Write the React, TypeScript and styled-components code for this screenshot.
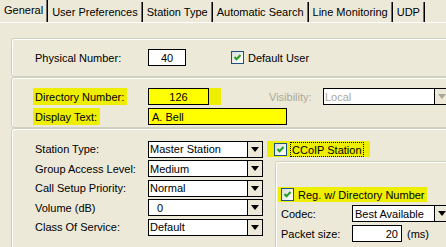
import React from "react";
import styled, { createGlobalStyle } from "styled-components";

const GlobalStyle = createGlobalStyle`
  html, body {
    margin: 0;
    padding: 0;
    background: #ece9d8;
    overflow: hidden;
  }
  body {
    font-family: "Liberation Sans", Arial, sans-serif;
    font-size: 11px;
    color: #000;
  }
`;

const Window = styled.div`
  width: 446px;
  height: 247px;
  overflow: hidden;
`;

const TabStrip = styled.div`
  display: flex;
  align-items: flex-end;
  height: 22px;
`;

const Tab = styled.div<{ $active?: boolean }>`
  height: ${(p) => (p.$active ? 22 : 20)}px;
  padding: ${(p) => (p.$active ? "0 4px 3px" : "0 4px")};
  box-sizing: border-box;
  display: flex;
  align-items: center;
  border-right: 1px solid #000;
  box-shadow: inset -1px 0 0 #716f64;
  white-space: nowrap;
`;

const Panel = styled.div`
  border-top: 1px solid #fff;
  padding: 15px 0 0 11px;
  width: 520px;
`;

const GroupBox = styled.div<{ $height: number; $pad: string }>`
  box-sizing: border-box;
  height: ${(p) => p.$height}px;
  padding: ${(p) => p.$pad};
  border: 1px solid #d0d0bf;
  border-radius: 3px;
  box-shadow: inset 1px 1px 0 #fff;
`;

const Row = styled.div<{ $h?: number }>`
  display: flex;
  align-items: center;
  height: ${(p) => p.$h ?? 17}px;
`;

const Stack = styled.div<{ $gap: number }>`
  display: flex;
  flex-direction: column;
  gap: ${(p) => p.$gap}px;
`;

const Label = styled.span<{ $w?: number; $disabled?: boolean }>`
  display: inline-block;
  width: ${(p) => (p.$w ? `${p.$w}px` : "auto")};
  flex: none;
  color: ${(p) => (p.$disabled ? "#aca899" : "#000")};
  white-space: nowrap;
`;

const Marker = styled.span<{ $w?: number }>`
  box-sizing: border-box;
  display: inline-flex;
  align-items: center;
  align-self: stretch;
  background: #eeee00;
  margin-left: -2px;
  padding: 0 3px 0 2px;
  white-space: nowrap;
  width: ${(p) => (p.$w ? `${p.$w}px` : "auto")};
`;

const LabelCell = styled.div<{ $w: number }>`
  width: ${(p) => p.$w}px;
  flex: none;
  display: flex;
  align-self: stretch;
  align-items: center;
`;

const TextBox = styled.div<{
  $w: number;
  $align?: "left" | "center" | "right";
  $fill?: string;
}>`
  box-sizing: border-box;
  width: ${(p) => p.$w}px;
  height: 17px;
  flex: none;
  border: 1px solid #000;
  background: ${(p) => p.$fill ?? "#fff"};
  display: flex;
  align-items: center;
  justify-content: ${(p) =>
    p.$align === "center" ? "center" : p.$align === "right" ? "flex-end" : "flex-start"};
  padding: 0 3px;
`;

const Select = styled.div<{ $w: number; $disabled?: boolean }>`
  box-sizing: border-box;
  width: ${(p) => p.$w}px;
  height: 17px;
  flex: none;
  border: 1px solid #000;
  background: #fff;
  display: flex;
  color: ${(p) => (p.$disabled ? "#aca899" : "#000")};
`;

const SelectValue = styled.div<{ $indent?: number }>`
  flex: 1;
  display: flex;
  align-items: center;
  padding-left: ${(p) => p.$indent ?? 1}px;
  white-space: nowrap;
  overflow: hidden;
`;

const SelectArrow = styled.div<{ $disabled?: boolean }>`
  width: 14px;
  flex: none;
  border-left: 1px solid #000;
  background: #ece9d8;
  display: flex;
  align-items: center;
  justify-content: center;
  &::after {
    content: "";
    border-left: 4px solid transparent;
    border-right: 4px solid transparent;
    border-top: 5px solid ${(p) => (p.$disabled ? "#aca899" : "#000")};
  }
`;

const CheckBox = styled.span`
  box-sizing: border-box;
  width: 13px;
  height: 13px;
  flex: none;
  border: 1px solid #1c5180;
  background: linear-gradient(135deg, #dcdcd7, #fff);
  display: inline-flex;
  margin-right: 4px;
`;

const FocusText = styled.span`
  outline: 1px dotted #000;
  outline-offset: 0;
  padding: 1px 1px 0;
`;

const Columns = styled.div`
  display: flex;
`;

const RightColumn = styled.div`
  margin-left: 4px;
  display: flex;
  flex-direction: column;
`;

const InnerBox = styled(GroupBox)`
  margin: 4px 0 0 8px;
  width: 200px;
`;

const Check = () => (
  <CheckBox>
    <svg width="11" height="11" viewBox="0 0 11 11">
      <polyline
        points="2.5,5 4.5,7.2 8.5,3"
        fill="none"
        stroke="#21a121"
        strokeWidth="2"
      />
    </svg>
  </CheckBox>
);

const Dropdown = ({
  value,
  w,
  indent,
  disabled,
}: {
  value: string;
  w: number;
  indent?: number;
  disabled?: boolean;
}) => (
  <Select $w={w} $disabled={disabled}>
    <SelectValue $indent={indent}>{value}</SelectValue>
    <SelectArrow $disabled={disabled} />
  </Select>
);

const tabs = [
  "General",
  "User Preferences",
  "Station Type",
  "Automatic Search",
  "Line Monitoring",
  "UDP",
];

const stationRows = [
  { label: "Station Type:", value: "Master Station" },
  { label: "Group Access Level:", value: "Medium" },
  { label: "Call Setup Priority:", value: "Normal" },
  { label: "Volume (dB)", value: "0", indent: 8 },
  { label: "Class Of Service:", value: "Default" },
];

export default function App() {
  return (
    <Window>
      <GlobalStyle />
      <TabStrip>
        {tabs.map((t, i) => (
          <Tab key={t} $active={i === 0}>
            {t}
          </Tab>
        ))}
      </TabStrip>
      <Panel>
        <GroupBox $height={39} $pad="10px 0 0 23px">
          <Row>
            <Label $w={113}>Physical Number:</Label>
            <TextBox $w={38} $align="center">
              40
            </TextBox>
            <Row style={{ marginLeft: 45 }}>
              <Check />
              <Label>Default User</Label>
            </Row>
          </Row>
        </GroupBox>

        <GroupBox $height={51} $pad="10px 0 0 23px">
          <Stack $gap={3}>
            <Row>
              <LabelCell $w={113}>
                <Marker>Directory Number:</Marker>
              </LabelCell>
              <Marker style={{ margin: 0, padding: "0 12px 0 0" }}>
                <TextBox $w={61} $align="center" $fill="#ffff00">
                  126
                </TextBox>
              </Marker>
              <Label $disabled style={{ marginLeft: 48, width: 54 }}>
                Visibility:
              </Label>
              <Dropdown value="Local" w={127} disabled />
            </Row>
            <Row>
              <LabelCell $w={113}>
                <Marker>Display Text:</Marker>
              </LabelCell>
              <TextBox $w={139} $fill="#ffff00">
                A. Bell
              </TextBox>
            </Row>
          </Stack>
        </GroupBox>

        <GroupBox $height={140} $pad="12px 0 0 23px">
          <Columns>
            <Stack $gap={3.5}>
              {stationRows.map((r) => (
                <Row key={r.label} $h={16}>
                  <Label $w={113}>{r.label}</Label>
                  <Dropdown value={r.value} w={115} indent={r.indent} />
                </Row>
              ))}
            </Stack>
            <RightColumn>
              <Row $h={16}>
                <Marker $w={103} style={{ margin: 0, paddingLeft: 7 }}>
                  <Check />
                  <FocusText>CCoIP Station</FocusText>
                </Marker>
              </Row>
              <InnerBox $height={100} $pad="25px 0 0 5px">
                <Stack $gap={3.5}>
                  <Row $h={15}>
                    <Marker $w={149} style={{ marginLeft: -3, paddingLeft: 3 }}>
                      <Check />
                      <Label>Reg. w/ Directory Number</Label>
                    </Marker>
                  </Row>
                  <Row $h={16}>
                    <Label $w={71}>Codec:</Label>
                    <Dropdown value="Best Available" w={98} indent={2} />
                  </Row>
                  <Row $h={17}>
                    <Label $w={71}>Packet size:</Label>
                    <TextBox $w={50} $align="right">
                      20
                    </TextBox>
                    <Label style={{ marginLeft: 5 }}>(ms)</Label>
                  </Row>
                </Stack>
              </InnerBox>
            </RightColumn>
          </Columns>
        </GroupBox>
      </Panel>
    </Window>
  );
}
